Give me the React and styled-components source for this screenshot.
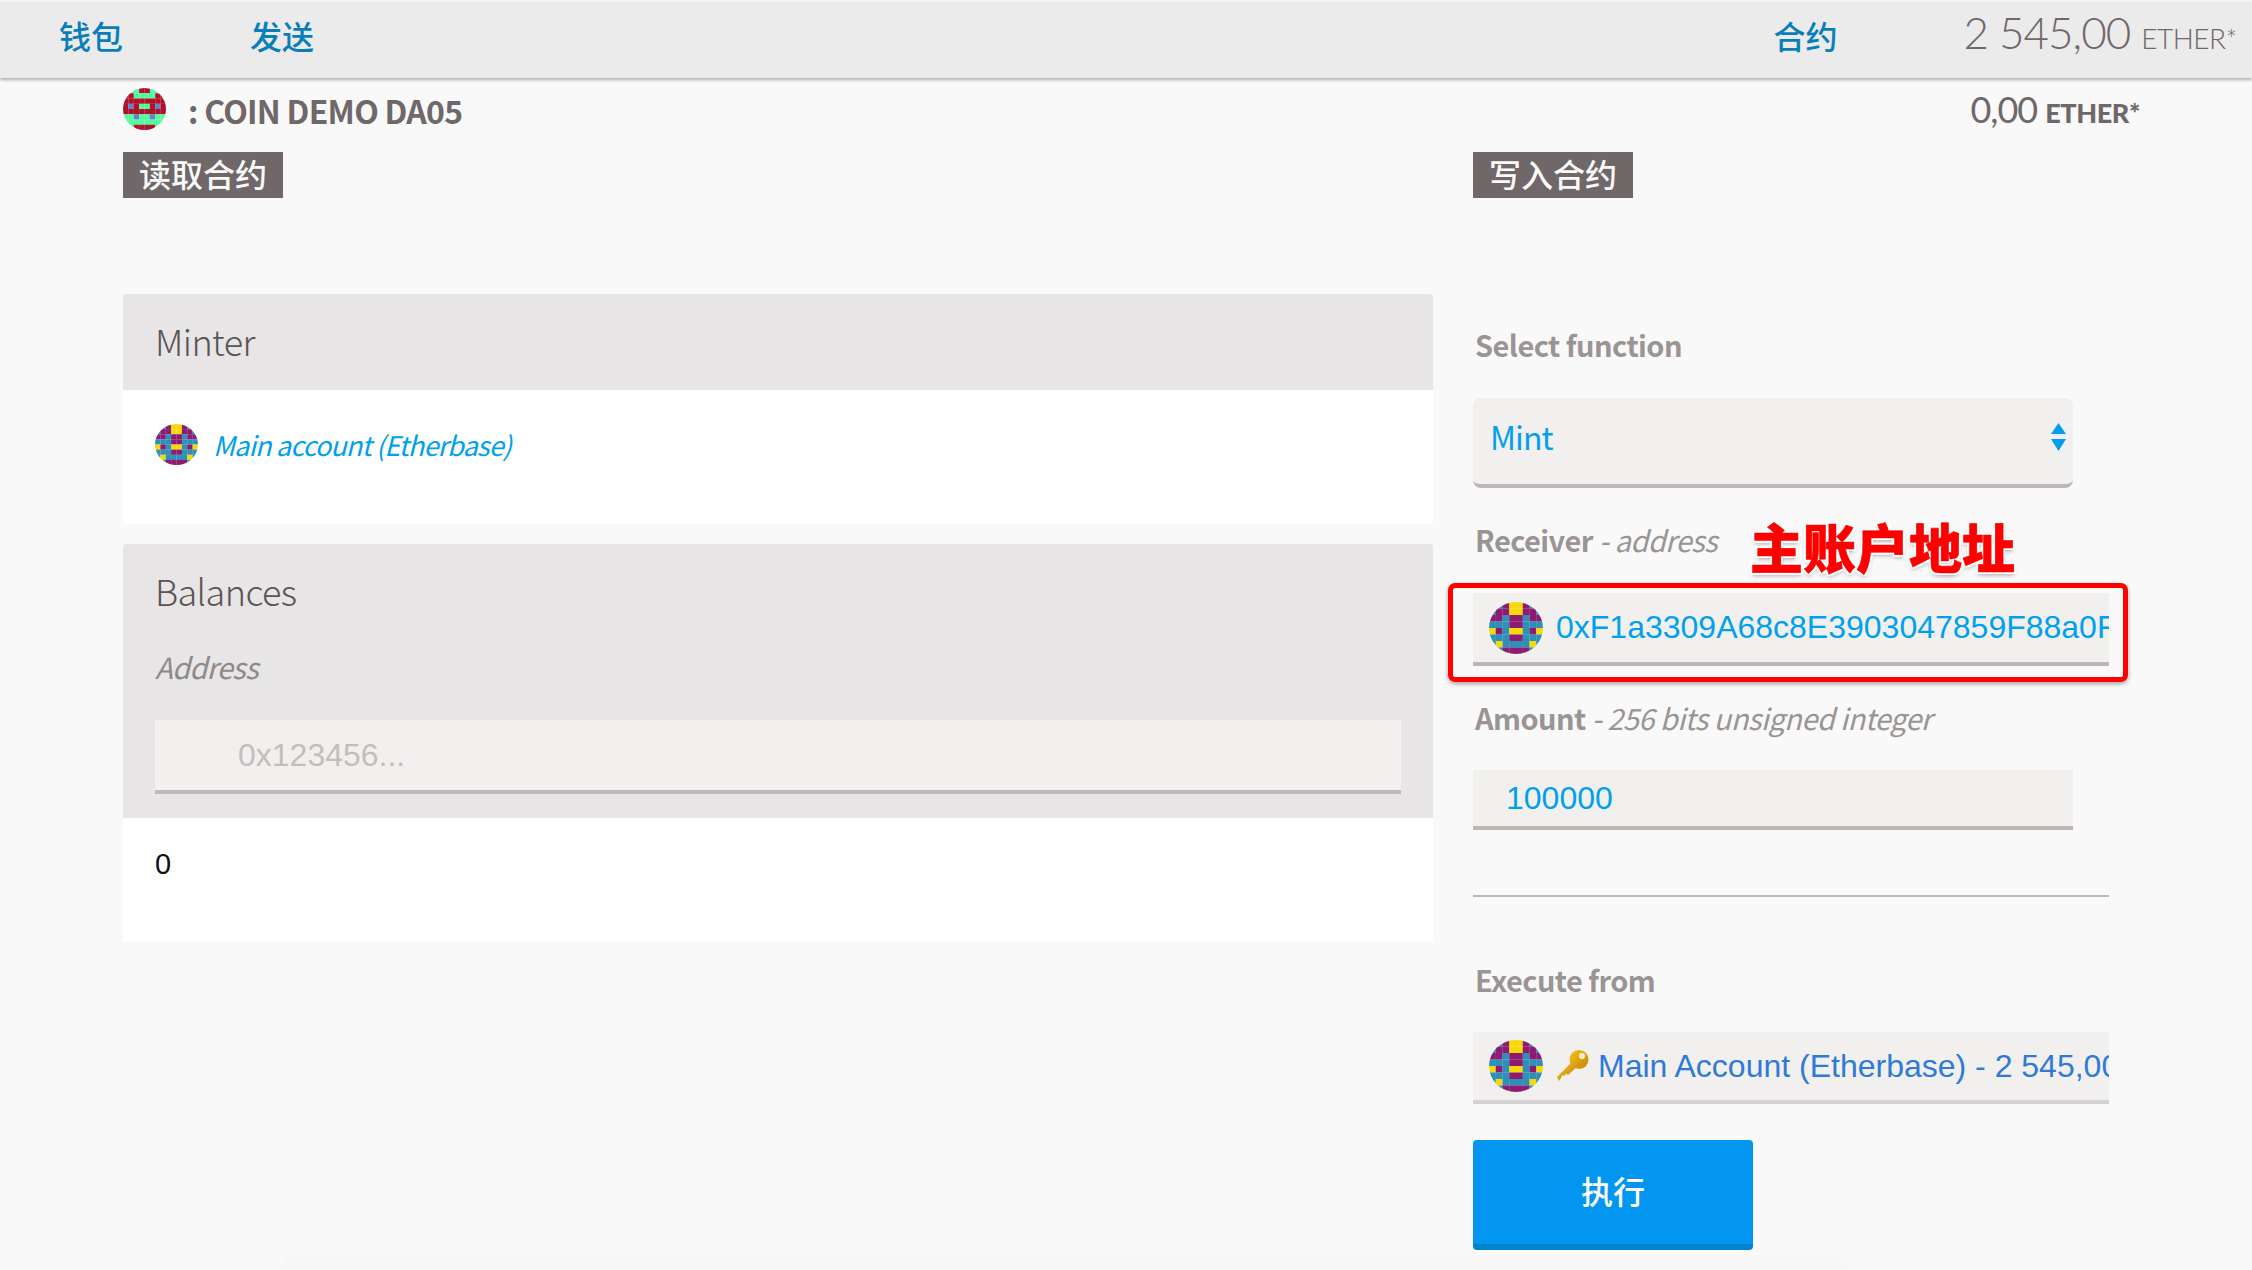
import React from 'react'
import styled, { createGlobalStyle } from 'styled-components'

const sans = `"Noto Sans CJK SC", "Noto Sans", sans-serif`
const arial = `"Liberation Sans", "Noto Sans CJK SC", sans-serif`

const GlobalStyle = createGlobalStyle`
    html, body {
        margin: 0;
        height: 100%;
        overflow: hidden;
        background: #f9f9f9;
        font-family: ${sans};
    }
    * { box-sizing: border-box; }
`

const Header = styled.header`
    display: flex;
    align-items: center;
    height: 78px;
    padding: 0 15px 0 59px;
    background: #ebebeb;
    border-top: 2px solid #f4f4f4;
    box-shadow: 0 2px 3px rgba(0,0,0,0.3);
`
const NavLink = styled.a`
    font-size: 32px;
    font-weight: 500;
    line-height: 40px;
    color: #0a7ebd;
    margin-bottom: 11px;
    margin-right: ${p => p.$gap}px;
    margin-left: ${p => p.$push ? 'auto' : '0'};
`
const Balance = styled.div`
    font-family: Lato, sans-serif;
    font-weight: 300;
    font-size: 44px;
    letter-spacing: -1px;
    margin-bottom: 16px;
    color: #6f6768;
    white-space: nowrap;
`
const BalanceUnit = styled.span`
    font-size: 28px;
    letter-spacing: -0.5px;
    margin-left: 11px;
`
const TitleRow = styled.div`
    display: flex;
    align-items: flex-start;
    height: 74px;
    padding: 10px 112px 0 123px;
`
const Title = styled.h1`
    margin: 1px 0 0 22px;
    font-size: 32px;
    line-height: 42px;
    font-weight: 700;
    letter-spacing: -0.75px;
    color: #6f6768;
`
const SubBalance = styled.div`
    margin-left: auto;
    font-family: Lato, sans-serif;
    font-size: 36px;
    line-height: 42px;
    color: #6f6768;
    letter-spacing: -1px;
`
const SubUnit = styled.span`
    font-size: 27px;
    font-weight: 900;
    letter-spacing: -0.4px;
    margin-left: 8px;
`
const Columns = styled.div`
    display: grid;
    grid-template-columns: 1310px 636px;
    column-gap: 40px;
    padding-left: 123px;
`
const LeftColumn = styled.section`
    display: flex;
    flex-direction: column;
    align-items: flex-start;
`
const RightColumn = styled.section`
    position: relative;
    display: flex;
    flex-direction: column;
    align-items: flex-start;
`
const Tag = styled.div`
    height: 46px;
    padding: 0 16px;
    font-size: 32px;
    font-weight: 500;
    line-height: 42px;
    color: #fafafa;
    background: #6f6768;
    white-space: nowrap;
`
const Panel = styled.article`
    width: 100%;
    margin-top: ${p => p.$top}px;
`
const PanelHead = styled.div`
    height: ${p => p.$height}px;
    padding: 0 32px;
    background: #e7e5e6;
    border-radius: 3px 3px 0 0;
`
const PanelTitle = styled.h2`
    margin: 0;
    padding-top: ${p => p.$top}px;
    font-size: 36px;
    line-height: 50px;
    font-weight: 300;
    letter-spacing: -0.6px;
    color: #5b5353;
`
const PanelBody = styled.div`
    height: ${p => p.$height}px;
    padding: ${p => p.$top}px 32px 0;
    background: #fff;
`
const AccountLink = styled.a`
    display: flex;
    align-items: flex-start;
    gap: 15px;
    font-size: 27px;
    line-height: 42px;
    letter-spacing: -0.85px;
    font-style: italic;
    color: #00a0f0;
`
const FieldHint = styled.div`
    margin-top: 31px;
    font-size: 29px;
    line-height: 40px;
    letter-spacing: -0.7px;
    font-style: italic;
    color: #8e8a8a;
`
const PlainInput = styled.input`
    display: block;
    width: 100%;
    height: 74px;
    margin-top: 34px;
    padding: 0 0 0 83px;
    border: 0;
    border-bottom: 4px solid #c0b8ba;
    border-radius: 0;
    background: #f2f0ef;
    outline: none;
    font-family: ${arial};
    font-size: 32px;
    &::placeholder { color: #c3bebd; opacity: 1; }
`
const ResultValue = styled.div`
    font-family: ${arial};
    font-size: 29px;
    line-height: 36px;
    color: #111;
`
const Label = styled.div`
    height: 36px;
    margin-top: ${p => p.$top}px;
    padding-left: 2px;
    font-size: 29px;
    line-height: 31px;
    letter-spacing: -0.55px;
    font-weight: 700;
    color: #9a9594;
    white-space: nowrap;
`
const LabelHint = styled.span`
    font-weight: 400;
    font-style: italic;
`
const SelectBox = styled.div`
    display: flex;
    align-items: center;
    justify-content: space-between;
    width: 600px;
    height: 90px;
    margin-top: 33px;
    padding: 0 7px 10px 17px;
    background: #f2f0ef;
    border-bottom: 4px solid #bdb5b6;
    border-radius: 8px;
    font-size: 32px;
    letter-spacing: -0.9px;
    color: #029ff0;
`
const Arrows = styled.svg`
    width: 15px;
    height: 28px;
    margin-top: 2px;
`
const AddressField = styled.div`
    display: flex;
    align-items: center;
    overflow: hidden;
    width: 636px;
    height: ${p => p.$height}px;
    margin-top: ${p => p.$top}px;
    padding-left: 16px;
    background: #f2f0ef;
    border-bottom: 4px solid ${p => p.$line};
    font-family: ${arial};
    font-size: 32px;
    white-space: nowrap;
    color: ${p => p.$color};
`
const AddressText = styled.span`
    margin-left: 13px;
    flex: none;
`
const AccountText = styled.span`
    margin-left: 9px;
    flex: none;
`
const AmountInput = styled.input`
    display: block;
    width: 600px;
    height: 60px;
    margin-top: 32px;
    padding: 0 0 0 33px;
    border: 0;
    border-bottom: 4px solid #bdb5b6;
    border-radius: 0;
    background: #f2f0ef;
    outline: none;
    font-family: ${arial};
    font-size: 32px;
    color: #029ff0;
`
const Divider = styled.hr`
    width: 636px;
    height: 2px;
    margin: 65px 0 0;
    border: 0;
    background: #bfb8ba;
`
const ExecuteButton = styled.button`
    width: 280px;
    height: 110px;
    margin-top: 36px;
    padding: 0 0 4px;
    border: 0;
    border-bottom: 6px solid #0284cd;
    border-radius: 4px;
    background: #0396f0;
    font-family: ${sans};
    font-size: 32px;
    font-weight: 500;
    color: #fff;
`
const Note = styled.div`
    position: absolute;
    left: 277px;
    top: 361px;
    font-family: "Noto Sans CJK SC", sans-serif;
    font-size: 53px;
    line-height: 66px;
    font-weight: 900;
    color: #ff0000;
    -webkit-text-stroke: 0.6px #ff0000;
    text-shadow: 2px 0 0 #fff, -2px 0 0 #fff, 0 2px 0 #fff, 0 -2px 0 #fff, 2px 2px 0 #fff, -2px -2px 0 #fff, 2px -2px 0 #fff, -2px 2px 0 #fff, 0 3px 4px rgba(0,0,0,0.35);
    white-space: nowrap;
`
const NoteFrame = styled.div`
    position: absolute;
    left: -25px;
    top: 431px;
    width: 680px;
    height: 99px;
    border: 5px solid #ff0000;
    border-radius: 7px;
    box-shadow: 0 2px 4px rgba(0,0,0,0.35);
`
const BottomSheet = styled.div`
    position: absolute;
    left: 281px;
    bottom: 0;
    width: 1567px;
    height: 15px;
    background: #f7f7f7;
    border-radius: 10px 10px 0 0;
`
const AvatarSvg = styled.svg`
    display: block;
    flex: none;
    width: ${p => p.$w}px;
    height: ${p => p.$h}px;
    border-radius: 50%;
    filter: blur(0.5px);
`
const KeySvg = styled.svg`
    display: block;
    flex: none;
    width: 33px;
    height: 32px;
    margin-left: 13px;
`

const purple = ['TTPYYPTT', 'TPPYYPPT', 'PPTPPTPP', 'TTTPPTTT', 'YPTYYTPY', 'TTTPPTTT', 'TYTTTTYT', 'TTPPPPTT']
const robot = ['GGGRRGGG', 'RRGGGGRR', 'RRRRRRRR', 'RBRGGRBR', 'RRRRRRRR', 'GGBGGBGG', 'GGGGGGGG', 'GGRRRRGG']
const purpleColors = { T: '#2e8fb8', P: '#8f1a72', Y: '#f5d90a' }
const robotColors = { G: '#52fb9e', R: '#b01028', B: '#5f85c8' }

// blockie style identicon, rows are 8 letters wide
function Blockie({ rows, colors, w, h }) {
    return (
        <AvatarSvg viewBox="0 0 8 8" preserveAspectRatio="none" $w={w} $h={h}>
            {rows.map((row, y) => row.split('').map((c, x) => (
                <rect key={x + '-' + y} x={x} y={y} width="1.02" height="1.02" fill={colors[c]} />
            )))}
        </AvatarSvg>
    )
}

function KeyIcon() {
    return (
        <KeySvg viewBox="0 0 33 32">
            <defs>
                <linearGradient id="keyGold" x1="0" y1="0" x2="1" y2="1">
                    <stop offset="0" stopColor="#f6c21c" />
                    <stop offset="1" stopColor="#c98208" />
                </linearGradient>
            </defs>
            <path d="M1 27 L17 11 L22 16 L12 25 L10 23.5 L8.5 26 L6.5 25 L5 28 L3 31 Z" fill="url(#keyGold)" />
            <circle cx="23" cy="9.5" r="9.5" fill="url(#keyGold)" />
            <circle cx="26" cy="6" r="3" fill="#fdf3c8" />
        </KeySvg>
    )
}

export default function App() {
    return (
        <>
            <GlobalStyle />
            <Header>
                <NavLink $gap={127}>钱包</NavLink>
                <NavLink $gap={0}>发送</NavLink>
                <NavLink $push $gap={126}>合约</NavLink>
                <Balance>2 545,00<BalanceUnit>ETHER*</BalanceUnit></Balance>
            </Header>
            <TitleRow>
                <Blockie rows={robot} colors={robotColors} w={43} h={42} />
                <Title>: COIN DEMO DA05</Title>
                <SubBalance>0,00<SubUnit>ETHER*</SubUnit></SubBalance>
            </TitleRow>
            <Columns>
                <LeftColumn>
                    <Tag>读取合约</Tag>
                    <Panel $top={96}>
                        <PanelHead $height={96}>
                            <PanelTitle $top={21}>Minter</PanelTitle>
                        </PanelHead>
                        <PanelBody $height={134} $top={34}>
                            <AccountLink>
                                <Blockie rows={purple} colors={purpleColors} w={43} h={41} />
                                Main account (Etherbase)
                            </AccountLink>
                        </PanelBody>
                    </Panel>
                    <Panel $top={20}>
                        <PanelHead $height={274}>
                            <PanelTitle $top={21}>Balances</PanelTitle>
                            <FieldHint>Address</FieldHint>
                            <PlainInput placeholder="0x123456..." />
                        </PanelHead>
                        <PanelBody $height={124} $top={28}>
                            <ResultValue>0</ResultValue>
                        </PanelBody>
                    </Panel>
                </LeftColumn>
                <RightColumn>
                    <Tag>写入合约</Tag>
                    <Label $top={131}>Select function</Label>
                    <SelectBox>
                        Mint
                        <Arrows viewBox="0 0 15 28">
                            <path d="M7.5 0 L15 11 L0 11 Z M0 16 L15 16 L7.5 28 Z" fill="#029ff0" />
                        </Arrows>
                    </SelectBox>
                    <Label $top={36}>Receiver <LabelHint>- address</LabelHint></Label>
                    <AddressField $top={33} $height={73} $line="#bdb5b6" $color="#00a0f0">
                        <Blockie rows={purple} colors={purpleColors} w={54} h={52} />
                        <AddressText>0xF1a3309A68c8E3903047859F88a0F6c5d3E1b2A4</AddressText>
                    </AddressField>
                    <Label $top={36}>Amount <LabelHint>- 256 bits unsigned integer</LabelHint></Label>
                    <AmountInput readOnly value="100000" />
                    <Divider />
                    <Label $top={67}>Execute from</Label>
                    <AddressField $top={32} $height={72} $line="#d3d1d1" $color="#2f7ad8">
                        <Blockie rows={purple} colors={purpleColors} w={54} h={52} />
                        <KeyIcon />
                        <AccountText>Main Account (Etherbase) - 2 545,00 ETHER</AccountText>
                    </AddressField>
                    <ExecuteButton>执行</ExecuteButton>
                    <Note>主账户地址</Note>
                    <NoteFrame />
                </RightColumn>
            </Columns>
            <BottomSheet />
        </>
    )
}
